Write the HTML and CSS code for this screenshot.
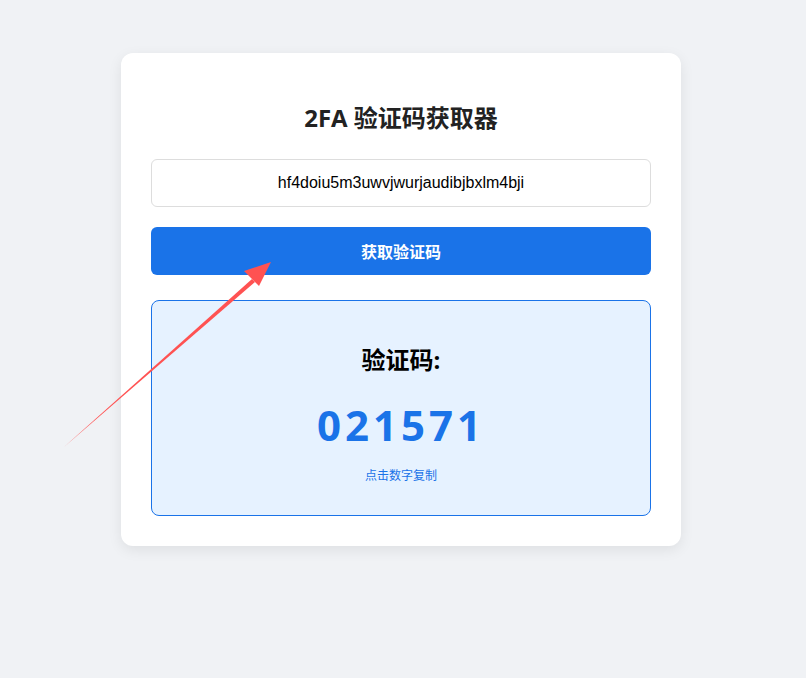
FILE: index.html
```html
<!DOCTYPE html>
<html lang="zh">
<head>
<meta charset="utf-8">
<title>2FA 验证码获取器</title>
<link rel="stylesheet" href="styles.css">
</head>
<body>
<main class="page">
  <section class="card">
    <h2 class="title">2FA 验证码获取器</h2>
    <input class="secret" type="text" value="hf4doiu5m3uwvjwurjaudibjbxlm4bji">
    <button class="fetch" type="button">获取验证码</button>
    <div class="result">
      <h3 class="result-label">验证码:</h3>
      <div class="code">021571</div>
      <p class="hint">点击数字复制</p>
    </div>
  </section>
</main>
<svg class="annotation" width="806" height="678" viewBox="0 0 806 678" aria-hidden="true">
  <polygon points="64,447 252,279 255,282" fill="#ff5252"/>
  <polygon points="271,262 244,271 259,286" fill="#ff5252"/>
</svg>
</body>
</html>
```

FILE: styles.css
```css
html, body {
  margin: 0;
  padding: 0;
}
body {
  background: #f0f2f5;
  font-family: "Open Sans", "Noto Sans CJK SC", sans-serif;
  width: 806px;
  height: 678px;
  position: relative;
  overflow: hidden;
}
.page {
  display: flex;
  justify-content: center;
  padding-top: 53px;
  padding-right: 4px;
}
.card {
  width: 500px;
  background: #fff;
  border-radius: 12px;
  box-shadow: 0 4px 14px rgba(0, 0, 0, 0.08);
  padding: 30px;
  display: flex;
  flex-direction: column;
}
.title {
  margin: 17px 0 23px;
  font-size: 24px;
  line-height: 36px;
  font-weight: 700;
  color: #222;
  text-align: center;
}
.secret {
  box-sizing: border-box;
  width: 100%;
  height: 48px;
  border: 1px solid #ddd;
  border-radius: 6px;
  padding: 0 12px;
  font-family: "Liberation Sans", Arial, sans-serif;
  font-size: 16px;
  color: #000;
  text-align: center;
  outline: none;
  margin: 0;
}
.fetch {
  margin-top: 20px;
  height: 48px;
  border: none;
  border-radius: 6px;
  background: #1a73e8;
  color: #fff;
  font-family: "Open Sans", "Noto Sans CJK SC", sans-serif;
  font-size: 16px;
  font-weight: 700;
}
.result {
  margin-top: 25px;
  box-sizing: border-box;
  height: 216px;
  border: 1px solid #1a73e8;
  border-radius: 8px;
  background: #e6f2ff;
  display: flex;
  flex-direction: column;
  align-items: center;
  padding-top: 41px;
}
.result-label {
  margin: 0;
  font-size: 24px;
  line-height: 36px;
  font-weight: 700;
  color: #000;
}
.code {
  margin-top: 23px;
  font-size: 42px;
  line-height: 48px;
  font-weight: 700;
  letter-spacing: 4px;
  color: #1a73e8;
}
.hint {
  margin: 18px 0 0;
  font-size: 12px;
  line-height: 18px;
  color: #1a73e8;
}
.annotation {
  position: absolute;
  left: 0;
  top: 0;
  pointer-events: none;
}
```
